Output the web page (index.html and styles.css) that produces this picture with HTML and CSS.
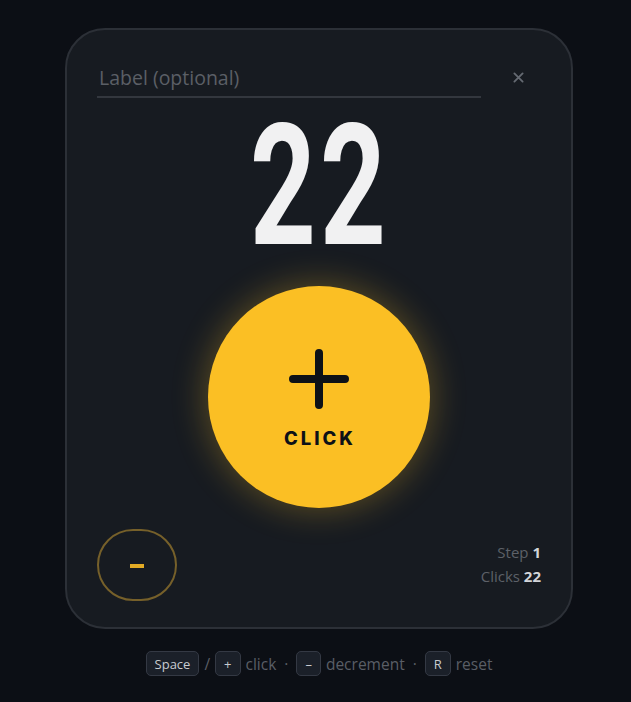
FILE: index.html
```html
<!DOCTYPE html>
<html lang="en">
<head>
<meta charset="utf-8">
<title>Counter</title>
<link rel="stylesheet" href="styles.css">
</head>
<body>
<main class="page">
  <section class="card">
    <header class="card-head">
      <input class="label-input" type="text" placeholder="Label (optional)">
      <button class="close-btn" aria-label="Close">
        <svg width="12" height="12" viewBox="0 0 12 12"><path d="M1.5 1.5 L10.5 10.5 M10.5 1.5 L1.5 10.5" stroke="currentColor" stroke-width="2" stroke-linecap="round"/></svg>
      </button>
    </header>
    <div class="count"><span class="count-num">22</span></div>
    <div class="click-wrap">
      <button class="click-btn">
        <svg class="plus" width="60" height="60" viewBox="0 0 60 60"><path d="M30 4 V56 M4 30 H56" stroke="#0d1117" stroke-width="8" stroke-linecap="round"/></svg>
        <span class="click-label">CLICK</span>
      </button>
    </div>
    <div class="card-foot">
      <button class="minus-btn" aria-label="Decrement"><span class="dash"></span></button>
      <div class="stats">
        <div class="stat">Step <b>1</b></div>
        <div class="stat">Clicks <b>22</b></div>
      </div>
    </div>
  </section>
  <footer class="hints">
    <kbd>Space</kbd><span class="sep">/</span><kbd>+</kbd><span>click</span><span class="dot">·</span><kbd>–</kbd><span>decrement</span><span class="dot">·</span><kbd>R</kbd><span>reset</span>
  </footer>
</main>
</body>
</html>
```
FILE: styles.css
```css
* { box-sizing: border-box; }
html, body { margin: 0; padding: 0; }
body {
  background: #0c0f15;
  font-family: "Open Sans", "Lato", sans-serif;
  height: 702px;
  overflow: hidden;
}
.page {
  display: flex;
  flex-direction: column;
  align-items: center;
  padding: 28px 0 0 7px;
}
.card {
  width: 508px;
  height: 601px;
  background: #171b21;
  border: 2px solid #2c3037;
  border-radius: 40px;
  padding: 30px 30px 0 30px;
  display: flex;
  flex-direction: column;
}
.card-head {
  display: flex;
  align-items: center;
  gap: 15px;
}
.label-input {
  flex: 1;
  height: 35px;
  background: transparent;
  border: none;
  border-bottom: 2px solid #33373e;
  color: #c9ccd1;
  font-family: "Open Sans", "Lato", sans-serif;
  font-size: 19.5px;
  padding: 0 2px 4px;
  outline: none;
}
.label-input::placeholder { color: #5b5f66; }
.close-btn {
  width: 44px;
  height: 40px;
  background: transparent;
  border: none;
  color: #656a72;
  display: flex;
  align-items: center;
  justify-content: center;
  padding: 0 0 6px;
  margin-right: 1px;
}
.close-btn svg { width: 11px; height: 11px; }
.count {
  display: flex;
  justify-content: center;
  height: 170px;
  margin-top: 1px;
}
.count-num {
  display: block;
  font-family: "Roboto", "Liberation Sans", sans-serif;
  font-weight: 700;
  font-size: 169px;
  line-height: 170px;
  color: #f1f1f2;
  transform: scaleX(0.68);
  letter-spacing: 6px;
  margin-left: 2px;
}
.click-wrap {
  display: flex;
  justify-content: center;
  margin-top: 15px;
}
.click-btn {
  width: 222px;
  height: 222px;
  border-radius: 50%;
  border: none;
  background: #fbbf24;
  box-shadow: 0 0 32px 4px rgba(251, 191, 36, 0.28);
  display: flex;
  flex-direction: column;
  align-items: center;
  justify-content: center;
  padding: 0;
  gap: 17px;
}
.plus { display: block; margin-top: 4px; }
.click-label {
  font-family: "Inter", "Lato", sans-serif;
  font-weight: 800;
  font-size: 18.5px;
  letter-spacing: 3px;
  color: #0d1117;
  line-height: 24px;
  margin-left: 2px;
}
.card-foot {
  display: flex;
  justify-content: space-between;
  align-items: center;
  margin-top: 21px;
}
.minus-btn {
  width: 80px;
  height: 72px;
  border-radius: 36px;
  background: transparent;
  border: 2px solid #76602a;
  display: flex;
  align-items: center;
  justify-content: center;
  padding: 0;
}
.dash {
  display: block;
  width: 14px;
  height: 4px;
  background: #e3ab25;
  margin-top: 2px;
}
.stats {
  display: flex;
  flex-direction: column;
  align-items: flex-end;
  gap: 4px;
  font-size: 15px;
  line-height: 20px;
  color: #5d6168;
  margin-top: -2px;
}
.stat b { color: #d3d5d9; font-weight: 700; }
.hints {
  display: flex;
  align-items: center;
  gap: 5px;
  margin-top: 22px;
  font-size: 15.5px;
  color: #5a5e66;
}
kbd {
  font-family: "Open Sans", "Noto Sans", sans-serif;
  font-size: 13px;
  color: #c8cbd0;
  background: #1b2029;
  border: 1px solid #343944;
  border-radius: 5px;
  height: 25px;
  min-width: 24px;
  padding: 0 8px;
  display: inline-flex;
  align-items: center;
  justify-content: center;
}
.dot { margin: 0 3px; }
```
